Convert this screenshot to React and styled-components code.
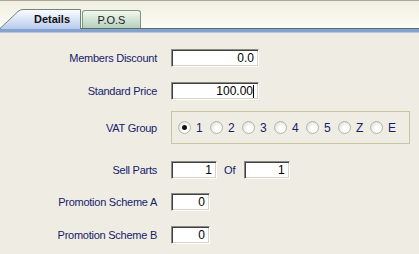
import styled, { createGlobalStyle } from "styled-components";

const Global = createGlobalStyle`
    html, body {
        margin: 0;
        padding: 0;
        background: #efede3;
    }
    body {
        font-family: "Liberation Sans", Arial, sans-serif;
        font-size: 11px;
    }
`;

const Window = styled.div`
    width: 419px;
    height: 254px;
    background: #efede3;
    overflow: hidden;
`;

const TabStrip = styled.div`
    height: 27px;
    display: flex;
    align-items: flex-end;
    border-top: 1px solid #a8a79b;
    border-bottom: 1px solid #5a6f63;
    background: linear-gradient(#efeedf, #fdfdf6);
`;

const Band = styled.div`
    height: 3px;
    background: #86a3d0;
    border-bottom: 1px solid #b7c7e2;
`;

const ActiveTab = styled.div`
    position: relative;
    width: 82px;
    height: 20px;
    margin-bottom: -1px;
    display: flex;
    align-items: center;
    justify-content: center;
    padding-left: 22px;
    box-sizing: border-box;
    font-weight: bold;
    color: #111;
    svg {
        position: absolute;
        left: 0;
        top: 0;
    }
    span {
        position: relative;
    }
`;

const Tab = styled.div`
    width: 59px;
    height: 18px;
    box-sizing: border-box;
    border: 1px solid #7d9585;
    border-bottom: none;
    border-radius: 3px 3px 0 0;
    background: linear-gradient(#f3f8f1, #b5d0bd);
    display: flex;
    align-items: center;
    justify-content: center;
    color: #222;
`;

const Form = styled.div`
    display: flex;
    flex-direction: column;
    padding-top: 16px;
`;

const Row = styled.div`
    display: flex;
    align-items: center;
    margin-top: ${(p) => p.$mt || 0}px;
`;

const Label = styled.div`
    width: 157px;
    margin-right: 14px;
    text-align: right;
    color: #16206c;
    letter-spacing: -0.25px;
    white-space: nowrap;
`;

const Field = styled.div`
    width: ${(p) => p.$w}px;
    height: 18px;
    box-sizing: border-box;
    border-top: 1px solid #8a8a84;
    border-left: 1px solid #8a8a84;
    border-right: 1px solid #fff;
    border-bottom: 1px solid #fff;
    box-shadow: inset 1px 1px 0 #404040, inset -1px -1px 0 #d8d5c8;
    background: #fff;
    display: flex;
    align-items: center;
    justify-content: flex-end;
    padding-right: 4px;
    color: #000;
    font-size: 12px;
`;

const Caret = styled.span`
    display: inline-block;
    width: 1px;
    height: 13px;
    background: #000;
`;

const Of = styled.span`
    color: #16206c;
    margin: 0 8px 0 7px;
`;

const GroupBox = styled.div`
    width: 239px;
    height: 33px;
    box-sizing: border-box;
    border: 1px solid #cbc4a2;
    display: flex;
    align-items: center;
    padding-left: 6px;
`;

const RadioItem = styled.div`
    width: 32px;
    display: flex;
    align-items: center;
    color: #16206c;
    font-size: 12px;
`;

const Radio = styled.span`
    width: 13px;
    height: 13px;
    box-sizing: border-box;
    border-radius: 50%;
    border: 1px solid #b4b4aa;
    background: radial-gradient(circle at 65% 65%, #ffffff 30%, #d4d3cb 100%);
    margin-right: 5px;
    display: flex;
    align-items: center;
    justify-content: center;
    &::after {
        content: "";
        width: 5px;
        height: 5px;
        border-radius: 50%;
        background: ${(p) => (p.$on ? "#111" : "transparent")};
    }
`;

const vatOptions = ["1", "2", "3", "4", "5", "Z", "E"];

export default function App() {
    return (
        <Window>
            <Global />
            <TabStrip>
                <ActiveTab>
                    <svg width="82" height="20" viewBox="0 0 82 20">
                        <defs>
                            <linearGradient id="act" x1="0" y1="0" x2="0" y2="1">
                                <stop offset="0" stopColor="#fdfdff" />
                                <stop offset="1" stopColor="#b9cbee" />
                            </linearGradient>
                        </defs>
                        <path
                            d="M0 20 L18 2.5 Q20 0.5 23 0.5 L80.5 0.5 L80.5 20 Z"
                            fill="url(#act)"
                        />
                        <path
                            d="M0 19.5 L18 2.5 Q20 0.5 23 0.5 L80.5 0.5 L80.5 20"
                            fill="none"
                            stroke="#6c8577"
                        />
                    </svg>
                    <span>Details</span>
                </ActiveTab>
                <Tab>P.O.S</Tab>
            </TabStrip>
            <Band />
            <Form>
                <Row>
                    <Label>Members Discount</Label>
                    <Field $w={88}>0.0</Field>
                </Row>
                <Row $mt={15}>
                    <Label>Standard Price</Label>
                    <Field $w={88}>
                        100.00
                        <Caret />
                    </Field>
                </Row>
                <Row $mt={11}>
                    <Label>VAT Group</Label>
                    <GroupBox>
                        {vatOptions.map((v) => (
                            <RadioItem key={v}>
                                <Radio $on={v === "1"} />
                                {v}
                            </RadioItem>
                        ))}
                    </GroupBox>
                </Row>
                <Row $mt={17}>
                    <Label>Sell Parts</Label>
                    <Field $w={46}>1</Field>
                    <Of>Of</Of>
                    <Field $w={46}>1</Field>
                </Row>
                <Row $mt={14}>
                    <Label>Promotion Scheme A</Label>
                    <Field $w={39}>0</Field>
                </Row>
                <Row $mt={15}>
                    <Label>Promotion Scheme B</Label>
                    <Field $w={39}>0</Field>
                </Row>
            </Form>
        </Window>
    );
}
